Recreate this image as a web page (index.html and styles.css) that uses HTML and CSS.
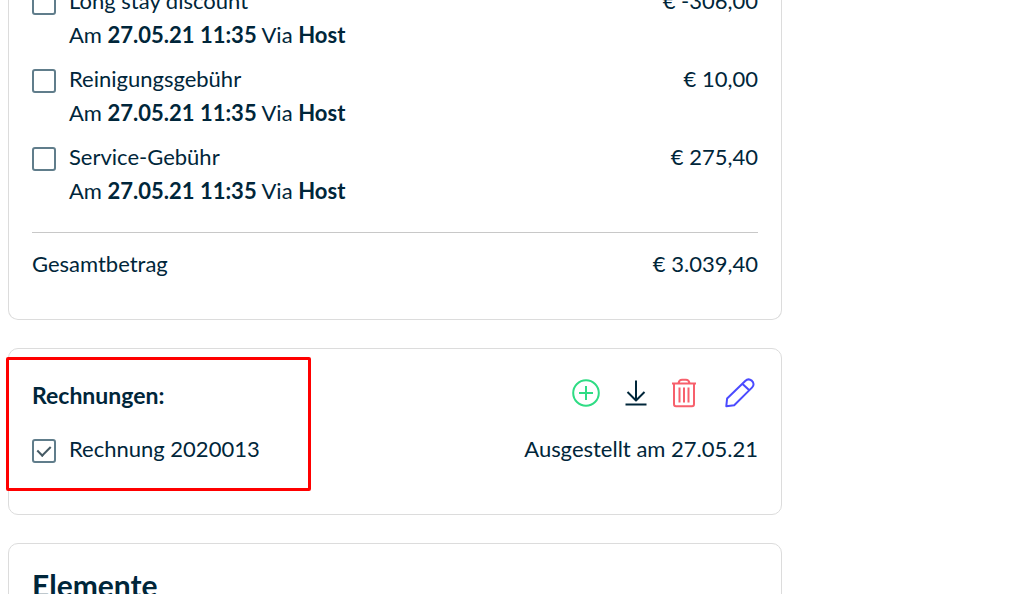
FILE: index.html
```html
<!DOCTYPE html>
<html lang="de">
<head>
    <meta charset="UTF-8">
    <meta name="viewport" content="width=device-width, initial-scale=1.0">
    <title>Rechnungen</title>
    <link rel="stylesheet" href="styles.css">
</head>
<body>

<main>
    <section class="card charges">
        <div class="row">
            <input type="checkbox" id="discount">
            <div class="item">
                <label for="discount">Long stay discount</label>
                <p>Am <b>27.05.21 11:35</b> Via <b>Host</b></p>
            </div>
            <span class="price">€ -306,00</span>
        </div>
        <div class="row">
            <input type="checkbox" id="cleaning">
            <div class="item">
                <label for="cleaning">Reinigungsgebühr</label>
                <p>Am <b>27.05.21 11:35</b> Via <b>Host</b></p>
            </div>
            <span class="price">€ 10,00</span>
        </div>
        <div class="row">
            <input type="checkbox" id="service">
            <div class="item">
                <label for="service">Service-Gebühr</label>
                <p>Am <b>27.05.21 11:35</b> Via <b>Host</b></p>
            </div>
            <span class="price">€ 275,40</span>
        </div>
        <div class="total">
            <span>Gesamtbetrag</span>
            <span class="price">€ 3.039,40</span>
        </div>
    </section>

    <section class="card invoices">
        <div class="invoices-header">
            <h3>Rechnungen:</h3>
            <div class="actions">
                <button type="button" class="add" aria-label="Hinzufügen">
                    <svg width="30" height="30" viewBox="0 0 30 30">
                        <circle cx="15" cy="15" r="12.8"/>
                        <path d="M15 8v14M8 15h14"/>
                    </svg>
                </button>
                <button type="button" class="download" aria-label="Herunterladen">
                    <svg width="30" height="30" viewBox="0 0 30 30">
                        <path d="M15 2.500v19.500M6.500 14l8.500 8.500 8.500-8.500M4.500 26.500h21"/>
                    </svg>
                </button>
                <button type="button" class="delete" aria-label="Löschen">
                    <svg width="30" height="30" viewBox="0 0 30 30">
                        <path d="M3 5.500h24M9.500 5c.5-2 1.800-3.200 3.500-3.200h4c1.700 0 3 1.200 3.500 3.200M5 6v20c0 1.500.8 2.200 2 2.200h16c1.200 0 2-.7 2-2.200V6M10.500 9.500v15M15 9.500v15M19.500 9.500v15"/>
                    </svg>
                </button>
                <button type="button" class="edit" aria-label="Bearbeiten">
                    <svg width="30" height="30" viewBox="0 0 30 30">
                        <path d="M1.300 28.200l.8-7.700L20.200 3C22 1.200 24.600.900 26.700 2.600c2.300 1.900 2.400 4.900.5 6.800L9.200 27.300zM17.300 5.800l7 6.500"/>
                    </svg>
                </button>
            </div>
        </div>
        <div class="row">
            <input type="checkbox" id="invoice" checked>
            <label for="invoice" class="item">Rechnung 2020013</label>
            <span class="price">Ausgestellt am 27.05.21</span>
        </div>
        <div class="highlight"></div>
    </section>

    <section class="card">
        <h2>Elemente</h2>
    </section>
</main>

</body>
</html>
```
FILE: styles.css
```css
* {
    box-sizing: border-box;
}

body {
    margin: 0;
    background-color: #fff;
    color: #00263a;
    font-family: Lato, "Liberation Sans", sans-serif;
    font-size: 22px;
    line-height: 34px;
}

main {
    max-width: 790px;
    padding: 0 8px;
}

h2, h3, p {
    margin: 0;
}

h2 {
    font-size: 30px;
}

h3 {
    font-size: 23px;
}

.card {
    position: relative;
    margin-bottom: 28px;
    padding: 24px 23px;
    border: 1px solid #dcdcdc;
    border-radius: 10px;
}

/* the list is scrolled, its first row starts above the window */
.charges {
    margin-top: -16px;
    padding-top: 0;
    padding-bottom: 38px;
    border-top: none;
}

.row {
    display: flex;
    align-items: flex-start;
    margin-bottom: 10px;
}

.item {
    flex: 1;
    margin-left: 13px;
}

.item label {
    display: block;
}

.price {
    white-space: nowrap;
}

input[type="checkbox"] {
    display: grid;
    place-items: center;
    appearance: none;
    width: 24px;
    height: 24px;
    margin: 7px 0 0;
    border: 2px solid #607d8b;
    border-radius: 3px;
    background-color: #fff;
}

input[type="checkbox"]:checked::before {
    content: "";
    width: 6px;
    height: 11px;
    margin-bottom: 3px;
    border: solid #455a64;
    border-width: 0 2px 2px 0;
    transform: rotate(45deg);
}

.total {
    display: flex;
    justify-content: space-between;
    margin-top: 24px;
    padding-top: 14px;
    border-top: 1px solid #c8c8c8;
}

.invoices {
    padding-top: 29px;
    padding-bottom: 38px;
}

.invoices-header {
    display: flex;
    justify-content: space-between;
    margin-bottom: 20px;
}

.actions {
    display: flex;
    gap: 20px;
    margin-right: 3px;
}

.actions button {
    height: 30px;
    padding: 0;
    border: none;
    background: none;
    cursor: pointer;
}

.actions svg {
    display: block;
    fill: none;
    stroke: currentColor;
    stroke-width: 2;
    stroke-linejoin: round;
}

.add {
    color: #2fdc84;
}

.actions .download {
    margin-right: -2px;
    color: #00263a;
}

.delete {
    color: #f7606c;
}

.edit {
    margin-left: 6px;
    color: #4b4bff;
}

.highlight {
    position: absolute;
    top: 8px;
    left: -3px;
    width: 305px;
    height: 134px;
    border: 3px solid #f00;
    border-radius: 2px;
    pointer-events: none;
}
```
